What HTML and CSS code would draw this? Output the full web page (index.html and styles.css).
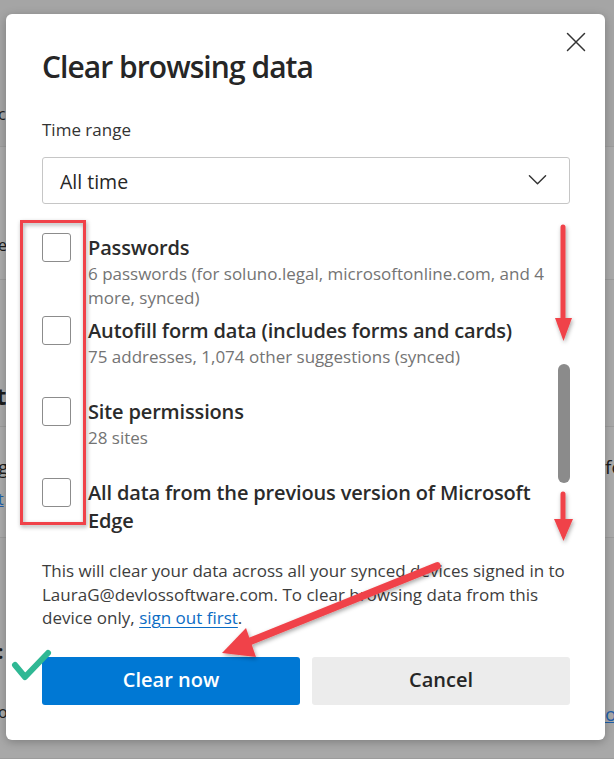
FILE: index.html
```html
<!DOCTYPE html>
<html lang="en">
<head>
<meta charset="utf-8">
<title>Clear browsing data</title>
<link rel="stylesheet" href="styles.css">
</head>
<body>
<div class="page">
  <div class="band band-top"><span class="frag-l f1">c</span></div>
  <div class="band band-a"><span class="frag-l f2">e</span></div>
  <div class="band band-b"><span class="frag-l f3">t</span></div>
  <div class="band band-c"><span class="frag-l f4">g</span><span class="frag-l f5">t</span><span class="frag-r f6">fo</span></div>
  <div class="band band-d"><span class="frag-l f7">:</span><span class="frag-l f8">o</span><span class="frag-r f9">or</span></div>
</div>

<div class="dialog" role="dialog" aria-label="Clear browsing data">
  <div class="header">
    <h1 class="title">Clear browsing data</h1>
    <button class="close" aria-label="Close">
      <svg width="20" height="20" viewBox="0 0 20 20"><path d="M1.5 1.5 L18.5 18.5 M18.5 1.5 L1.5 18.5" stroke="#333" stroke-width="1.5" fill="none" stroke-linecap="round"/></svg>
    </button>
  </div>

  <div class="field-label">Time range</div>
  <div class="select">
    <span>All time</span>
    <svg width="20" height="12" viewBox="0 0 20 12"><path d="M1.5 1.5 L10 10 L18.5 1.5" stroke="#333" stroke-width="1.5" fill="none" stroke-linecap="round" stroke-linejoin="round"/></svg>
  </div>

  <div class="scroll">
    <div class="list">
      <div class="item">
        <span class="box"></span>
        <div class="text">
          <div class="name">Passwords</div>
          <div class="desc">6 passwords (for soluno.legal, microsoftonline.com, and 4<br>more, synced)</div>
        </div>
      </div>
      <div class="item">
        <span class="box"></span>
        <div class="text">
          <div class="name">Autofill form data (includes forms and cards)</div>
          <div class="desc">75 addresses, 1,074 other suggestions (synced)</div>
        </div>
      </div>
      <div class="item">
        <span class="box"></span>
        <div class="text">
          <div class="name">Site permissions</div>
          <div class="desc">28 sites</div>
        </div>
      </div>
      <div class="item">
        <span class="box"></span>
        <div class="text">
          <div class="name">All data from the previous version of Microsoft<br>Edge</div>
        </div>
      </div>
    </div>
    <div class="thumb"></div>
  </div>

  <p class="note">This will clear your data across all your synced devices signed in to<br>LauraG@devlossoftware.com. To clear browsing data from this<br>device only, <a href="#">sign out first</a>.</p>

  <div class="actions">
    <button class="btn primary">Clear now</button>
    <button class="btn secondary">Cancel</button>
  </div>
</div>

<svg class="annot" width="614" height="759" viewBox="0 0 614 759">
  <defs>
    <filter id="sh" x="-20%" y="-20%" width="140%" height="140%">
      <feDropShadow dx="1" dy="2" stdDeviation="2" flood-color="#000" flood-opacity="0.35"/>
    </filter>
  </defs>
  <g filter="url(#sh)">
    <rect x="21.5" y="221.5" width="63" height="302" fill="none" stroke="#f04349" stroke-width="3"/>
    <path d="M563 227 L563 322" stroke="#f04349" stroke-width="5" stroke-linecap="round"/>
    <path d="M555 318 L572 318 L563.5 341 Z" fill="#f04349"/>
    <path d="M563 494 L563 522" stroke="#f04349" stroke-width="5" stroke-linecap="round"/>
    <path d="M554 519 L573 519 L563.5 541 Z" fill="#f04349"/>
    <path d="M437 566 L246 643" stroke="#f04349" stroke-width="7.5" stroke-linecap="round"/>
    <path d="M222 653 L246 628 L256 657 Z" fill="#f04349"/>
  </g>
  <path d="M15 665 L25 677 L48 653" stroke="#2fb894" stroke-width="6" fill="none" stroke-linecap="round" stroke-linejoin="round"/>
</svg>
</body>
</html>
```

FILE: styles.css
```css
html, body {
  margin: 0;
  padding: 0;
}
body {
  width: 614px;
  height: 759px;
  overflow: hidden;
  position: relative;
  background: #a6a6a6;
  font-family: "Open Sans", "Noto Sans", sans-serif;
}

/* dimmed page behind the dialog */
.page {
  display: flex;
  flex-direction: column;
  height: 759px;
}
.band {
  position: relative;
  border-bottom: 1px solid #9c9c9c;
  color: #1c1c1c;
  font-size: 16px;
}
.band-top { height: 146px; background: #a5a5a5; }
.band-a { height: 132px; background: #ababab; }
.band-b { height: 146px; background: #a9a9a9; }
.band-c { height: 110px; background: #ababab; }
.band-d { flex: 1; background: #a8a8a8; }
.frag-l, .frag-r {
  position: absolute;
  line-height: 20px;
}
.frag-l { left: -2px; }
.frag-r { left: 605px; }
.f1 { top: 104px; }
.f2 { top: 88px; }
.f3 { top: 106px; font-size: 24px; font-weight: 700; left: -4px; }
.f4 { top: 30px; font-size: 19px; }
.f5 { top: 62px; color: #1f5fa8; text-decoration: underline; }
.f6 { top: 30px; font-size: 19px; }
.f7 { top: 104px; font-size: 19px; font-weight: 700; }
.f8 { top: 164px; }
.f9 { top: 166px; color: #1f5fa8; text-decoration: underline; font-size: 19px; }

/* dialog */
.dialog {
  position: absolute;
  left: 6px;
  top: 14px;
  width: 599px;
  height: 726px;
  box-sizing: border-box;
  padding: 0 35px 0 36px;
  background: #fff;
  border-radius: 6px;
  box-shadow: 0 2px 10px rgba(0, 0, 0, 0.25);
  display: flex;
  flex-direction: column;
}
.header {
  display: flex;
  justify-content: space-between;
  align-items: flex-start;
  height: 104px;
}
.title {
  margin: 33px 0 0;
  font-size: 30px;
  line-height: 40px;
  font-weight: 600;
  color: #262626;
  letter-spacing: -0.95px;
}
.close {
  margin: 15px -19px 0 0;
  width: 26px;
  height: 26px;
  padding: 3px;
  border: 0;
  background: transparent;
  display: flex;
  align-items: center;
  justify-content: center;
}
.field-label {
  font-size: 17px;
  line-height: 22px;
  color: #333;
  height: 38px;
  margin-top: 1px;
}
.select {
  height: 47px;
  box-sizing: border-box;
  border: 1px solid #c6c6c6;
  border-radius: 3px;
  display: flex;
  align-items: center;
  justify-content: space-between;
  padding: 2px 22px 0 17px;
  font-size: 19.5px;
  color: #262626;
}
.select svg { margin-top: -3px; width: 19px; }

.scroll {
  position: relative;
  margin-top: 10px;
  height: 323px;
  overflow: hidden;
}
.list {
  padding-top: 19px;
  display: flex;
  flex-direction: column;
}
.item {
  display: flex;
  gap: 17px;
  min-height: 81px;
  box-sizing: border-box;
  padding-bottom: 6px;
}
.box {
  flex: none;
  width: 29px;
  height: 29px;
  box-sizing: border-box;
  border: 1px solid #8c8c8c;
  border-radius: 3px;
}
.text { padding-top: 1px; }
.name {
  font-size: 20px;
  line-height: 28px;
  font-weight: 600;
  color: #2b2b2b;
  letter-spacing: -0.15px;
}
.desc {
  font-size: 17px;
  line-height: 24px;
  color: #747474;
}
.thumb {
  position: absolute;
  right: 0;
  top: 150px;
  width: 12px;
  height: 119px;
  border-radius: 6px;
  background: #8b8b8b;
}

.note {
  margin: 22px 0 0;
  font-size: 17px;
  line-height: 23.5px;
  color: #3d3d3d;
}
.note a {
  color: #0b6cc4;
  text-decoration: underline;
  text-underline-offset: 3px;
}

.actions {
  display: flex;
  gap: 12px;
  margin-top: 27px;
}
.btn {
  flex: 1;
  height: 48px;
  border: 0;
  border-radius: 3px;
  font-family: inherit;
  font-size: 20px;
  font-weight: 600;
  padding: 0 0 2px;
}
.primary { background: #0078d4; color: #fff; }
.secondary { background: #ececec; color: #262626; }

.annot {
  position: absolute;
  left: 0;
  top: 0;
  pointer-events: none;
}
```
